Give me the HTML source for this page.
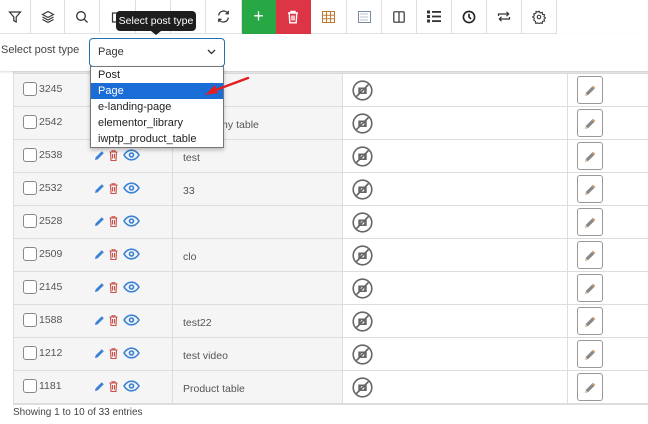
<!DOCTYPE html>
<html><head><style>
*{box-sizing:border-box;margin:0;padding:0}
body{width:648px;height:424px;overflow:hidden;background:#fff;font-family:"Liberation Sans",sans-serif;position:relative;color:#444}
.tb{position:absolute;top:0;height:34px;border-right:1px solid #ddd;border-bottom:1px solid #e4e4e4;display:flex;align-items:center;justify-content:center}
.bar2{position:absolute;top:34px;left:0;width:648px;height:37px;background:#fff;box-shadow:0 1px 2px rgba(0,0,0,.15);z-index:2}
.row{position:absolute;left:13px;width:635px;height:33px;border-bottom:1px solid #ddd}
.c1{position:absolute;left:0;top:0;width:160px;height:32px;background:#f5f5f5;border-right:1px solid #ddd}
.c2{position:absolute;left:160px;top:0;width:170px;height:32px;background:#f5f5f5;border-right:1px solid #ddd}
.c3{position:absolute;left:330px;top:0;width:225px;height:32px;background:#fff;border-right:1px solid #ddd}
.cb{position:absolute;left:10px;top:8px;width:14px;height:14px;border:1px solid #888;border-radius:3px;background:#fff}
.id{position:absolute;left:26px;top:9px;font-size:10.5px;color:#555}
.t{position:absolute;left:10px;top:12px;font-size:10.5px;color:#555}
.eb{position:absolute;left:564px;top:2px;width:26px;height:28px;border:1px solid #999;border-radius:3px;background:#fff}
</style></head><body>
<div class="tb" style="left:0;width:31px"><svg width="14" height="14" viewBox="0 0 14 14"><path d="M1.5 2h11l-4.3 5v5l-2.4-1.3V7z" fill="none" stroke="#333" stroke-width="1.2"/></svg></div>
<div class="tb" style="left:31px;width:34px"><svg width="14" height="14" viewBox="0 0 14 14" fill="none" stroke="#333" stroke-width="1.1"><path d="M7 1.5l5.5 3-5.5 3-5.5-3z"/><path d="M1.5 7l5.5 3 5.5-3M1.5 9.5l5.5 3 5.5-3"/></svg></div>
<div class="tb" style="left:65px;width:35px"><svg width="14" height="14" viewBox="0 0 14 14" fill="none" stroke="#333" stroke-width="1.3"><circle cx="6" cy="6" r="4.3"/><path d="M9.2 9.2l3.3 3.3"/></svg></div>
<div class="tb" style="left:100px;width:36px"><svg width="14" height="14" viewBox="0 0 14 14" fill="none" stroke="#333" stroke-width="1.2"><rect x="1.5" y="3" width="9" height="9"/></svg></div>
<div class="tb" style="left:136px;width:35px"></div>
<div class="tb" style="left:171px;width:35px"></div>
<div class="tb" style="left:206px;width:36px"><svg width="15" height="15" viewBox="0 0 14 14" fill="none" stroke="#333" stroke-width="1.2"><path d="M2.5 6a4.6 4.6 0 0 1 8.6-1.8M11.5 8a4.6 4.6 0 0 1-8.6 1.8"/><path d="M11.4 1.8v2.6H8.8M2.6 12.2V9.6h2.6"/></svg></div>
<div class="tb" style="left:242px;width:34px;background:#28a745;border-color:#28a745;color:#fff;font-size:18px">+</div>
<div class="tb" style="left:276px;width:35px;background:#dc3545;border-color:#dc3545"><svg width="12" height="14" viewBox="0 0 12 14" fill="none" stroke="#fff" stroke-width="1.4"><path d="M1 3h10M4 3V1.5h4V3M2.2 3l.6 9.8h6.4L9.8 3M5 5.5v5M7 5.5v5"/></svg></div>
<div class="tb" style="left:311px;width:36px"><svg width="13" height="12" viewBox="0 0 13 12" fill="none" stroke="#c07a30" stroke-width="1"><rect x=".5" y=".5" width="12" height="11"/><path d="M.5 4.2h12M.5 7.8h12M4.5.5v11M8.5.5v11"/></svg></div>
<div class="tb" style="left:347px;width:35px"><svg width="13" height="12" viewBox="0 0 13 12" fill="none" stroke="#7a8aa0" stroke-width="1"><rect x=".5" y=".5" width="12" height="11"/><path d="M2.5 3h8M2.5 6h8M2.5 9h8" stroke-dasharray="1 1"/></svg></div>
<div class="tb" style="left:382px;width:35px"><svg width="12" height="12" viewBox="0 0 12 12" fill="none" stroke="#333" stroke-width="1.2"><rect x=".8" y=".8" width="10.4" height="10.4" rx="1"/><path d="M6 .8v10.4"/></svg></div>
<div class="tb" style="left:417px;width:35px"><svg width="14" height="13" viewBox="0 0 14 13" fill="#333"><rect x="0" y="0.5" width="3" height="3"/><rect x="0" y="5" width="3" height="3"/><rect x="0" y="9.5" width="3" height="3"/><rect x="5" y="1" width="9" height="1.8"/><rect x="5" y="5.6" width="9" height="1.8"/><rect x="5" y="10.2" width="9" height="1.8"/></svg></div>
<div class="tb" style="left:452px;width:35px"><svg width="14" height="14" viewBox="0 0 14 14" fill="none" stroke="#222" stroke-width="1.6"><circle cx="7" cy="7" r="5.6"/><path d="M7 3.8V7l2 2"/></svg></div>
<div class="tb" style="left:487px;width:35px"><svg width="14" height="13" viewBox="0 0 14 13" fill="none" stroke="#333" stroke-width="1.2"><path d="M1.5 6V4h10M9.5 1.8l2.2 2.2-2.2 2.2M12.5 7v2h-10M4.5 11.2L2.3 9l2.2-2.2"/></svg></div>
<div class="tb" style="left:522px;width:35px"><svg width="14" height="14" viewBox="0 0 24 24" fill="none" stroke="#333" stroke-width="1.8"><circle cx="12" cy="12" r="3"/><path d="M12 2l2 3 3.5-1 .5 3.5 3.5.5-1 3.5 3 2-3 2 1 3.5-3.5.5-.5 3.5-3.5-1-2 3-2-3-3.5 1-.5-3.5L3 17.5l1-3.5-3-2 3-2L3 6.5 6.5 6 7 2.5 10.5 3.5z"/></svg></div>

<div class="bar2">
<div style="position:absolute;left:1px;top:10px;font-size:11px;color:#444">Select post type</div>
<div style="position:absolute;left:89px;top:4px;width:136px;height:29px;border:1.5px solid #2271b1;border-radius:4px;background:#fff"><span style="position:absolute;left:8px;top:7px;font-size:11px;color:#333">Page</span><svg style="position:absolute;right:8px;top:10px" width="9" height="6" viewBox="0 0 9 6"><path d="M1 1l3.5 3.5L8 1" fill="none" stroke="#333" stroke-width="1.3"/></svg></div>
</div>

<div style="position:absolute;left:116px;top:11px;width:80px;height:20px;background:#1e1e1e;border-radius:4px;color:#fff;font-size:10.5px;text-align:center;line-height:20px;z-index:5">Select post type</div>
<div style="position:absolute;left:151px;top:31px;border-left:5px solid transparent;border-right:5px solid transparent;border-top:4px solid #1e1e1e;z-index:5"></div>

<div style="position:absolute;left:13px;top:70px;width:635px;height:4px;border-bottom:1px solid #ddd;background:#eee"></div>
<div style="position:absolute;left:13px;top:70px;width:1px;height:334px;background:#ddd;z-index:1"></div>

<div id="rows"></div>
<script>
var d=[["3245","Explore"],["2542","Search my table"],["2538","test"],["2532","33"],["2528",""],["2509","clo"],["2145",""],["1588","test22"],["1212","test video"],["1181","Product table"]];
var h="";
var img='<svg style="position:absolute;left:9px;top:6px" width="21" height="21" viewBox="0 0 21 21" fill="none" stroke="#666" stroke-width="1.6"><circle cx="10.5" cy="10.5" r="9.3"/><rect x="6.3" y="7.5" width="8.4" height="6.5" fill="#666" stroke="none"/><circle cx="10.5" cy="10.8" r="1.8" fill="#fff" stroke="none"/><path d="M4.5 16.5L16.5 4.5"/></svg>';
var pen='<svg style="position:absolute;left:6px;top:7px" width="13" height="13" viewBox="0 0 13 13"><path d="M1 12l.7-3L9 1.7l2.3 2.3L4 11.3z" fill="#888"/><path d="M8.3 2.4l2.3 2.3" stroke="#d9a460" stroke-width="1.3"/><path d="M1 12l.7-3 2.3 2.3z" fill="#e8c9a0"/></svg>';
for(var i=0;i<d.length;i++){
var y=74+i*33;
h+='<div class="row" style="top:'+y+'px"><div class="c1"><div class="cb"></div><div class="id">'+d[i][0]+'</div>'+
'<svg style="position:absolute;left:81px;top:10px" width="11" height="11" viewBox="0 0 11 11"><path d="M1 10l.6-2.6L7.8 1.2 9.8 3.2 3.6 9.4z" fill="#3b82d6"/></svg>'+
'<svg style="position:absolute;left:96px;top:10px" width="9" height="11" viewBox="0 0 9 11" fill="none" stroke="#c9504a" stroke-width="1.1"><path d="M.5 2h8M3 2V.8h3V2M1.5 2l.5 8.5h5l.5-8.5M3.5 4v4.5M5.5 4v4.5"/></svg>'+
'<svg style="position:absolute;left:110px;top:9px" width="17" height="12" viewBox="0 0 17 12" fill="none" stroke="#3b82d6" stroke-width="1.6"><path d="M1 6c2-3.2 4.5-4.8 7.5-4.8S14 2.8 16 6c-2 3.2-4.5 4.8-7.5 4.8S3 9.2 1 6z"/><circle cx="8.5" cy="6" r="2"/></svg>'+
'</div><div class="c2">'+(d[i][1]?'<div class="t">'+d[i][1]+'</div>':'')+'</div><div class="c3">'+img+'</div><div class="eb">'+pen+'</div></div>';
}
document.getElementById("rows").innerHTML=h;
</script>
<div style="position:absolute;left:13px;top:403px;width:635px;height:2px;background:#ddd"></div>
<div style="position:absolute;left:13px;top:407px;font-size:10px;color:#444">Showing 1 to 10 of 33 entries</div>

<div style="position:absolute;left:90px;top:66px;width:134px;height:82px;background:#fff;border:1px solid #767676;font-size:11px;color:#222;z-index:6;box-shadow:0 2px 4px rgba(0,0,0,.25)">
<div style="height:16px;padding-left:7px;line-height:16px">Post</div>
<div style="height:16px;padding-left:7px;line-height:16px;background:#1a6dd6;color:#fff">Page</div>
<div style="height:16px;padding-left:7px;line-height:16px">e-landing-page</div>
<div style="height:16px;padding-left:7px;line-height:16px">elementor_library</div>
<div style="height:16px;padding-left:7px;line-height:16px">iwptp_product_table</div>
</div>
<svg style="position:absolute;left:195px;top:72px;z-index:7" width="60" height="30" viewBox="0 0 60 30"><path d="M53 6L18 19" stroke="#e02020" stroke-width="2.5" stroke-linecap="round"/><path d="M10 23l10-10 3 8z" fill="#e02020"/></svg>
</body></html>
